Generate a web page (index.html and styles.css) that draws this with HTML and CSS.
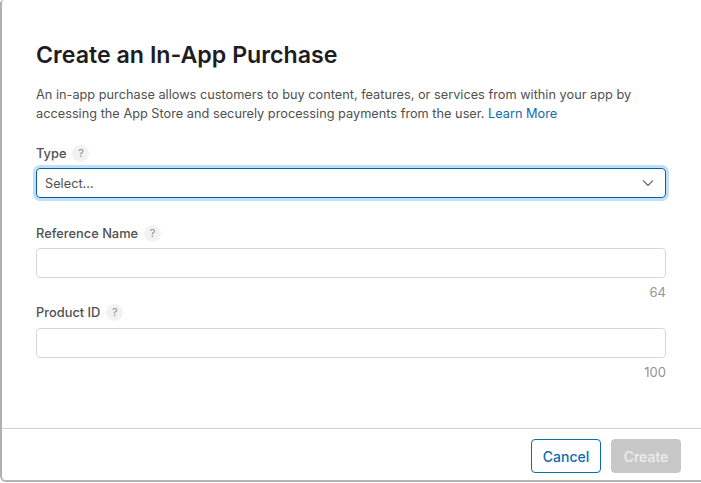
FILE: index.html
```html
<!DOCTYPE html>
<html lang="en">
<head>
<meta charset="utf-8">
<title>Create an In-App Purchase</title>
<link rel="stylesheet" href="styles.css">
</head>
<body>
<div class="modal">
  <div class="content">
    <h1 class="title">Create an In-App Purchase</h1>
    <p class="intro">An in-app purchase allows customers to buy content, features, or services from within your app by accessing the App Store and securely processing payments from the user. <a class="link" href="#">Learn More</a></p>
    <div class="field field-type">
      <div class="label-row"><span class="label">Type</span><span class="help">?</span></div>
      <div class="select">
        <span>Select...</span>
        <svg class="chevron" width="10" height="6" viewBox="0 0 10 6"><path d="M0 .5 5 5.500 10 .5" fill="none" stroke="#666" stroke-width="1.200"/></svg>
      </div>
    </div>
    <div class="field field-name">
      <div class="label-row"><span class="label">Reference Name</span><span class="help">?</span></div>
      <div class="input"></div>
      <div class="count">64</div>
    </div>
    <div class="field field-id">
      <div class="label-row"><span class="label">Product ID</span><span class="help">?</span></div>
      <div class="input"></div>
      <div class="count">100</div>
    </div>
  </div>
  <div class="footer">
    <button class="btn btn-cancel" type="button">Cancel</button>
    <button class="btn btn-create" type="button">Create</button>
  </div>
</div>
</body>
</html>
```
FILE: styles.css
```css
html, body {
  margin: 0;
  padding: 0;
  background: #fff;
}
body {
  font-family: Inter, "Liberation Sans", sans-serif;
  color: #333;
  overflow: hidden;
}
.modal {
  box-sizing: border-box;
  width: 701px;
  height: 482px;
  background: #fff;
  border-left: 2px solid #b0b0b0;
  border-bottom: 2px solid #b4b4b4;
  border-radius: 4px 0 0 6px;
  display: flex;
  flex-direction: column;
}
.content {
  flex: 1;
  padding: 41px 35px 0 34px;
}
.title {
  margin: 0;
  font-size: 23.2px;
  line-height: 29px;
  font-weight: 600;
  color: #1d1d1f;
}
.intro {
  margin: 15px 0 0;
  font-size: 12.75px;
  line-height: 19px;
  color: #505050;
  width: 615px;
}
.link {
  color: #0f6cae;
  text-decoration: none;
}
.field-type { margin-top: 20px; }
.field-name { margin-top: 25px; }
.field-id { margin-top: 2px; }
.label-row {
  display: flex;
  align-items: center;
  gap: 6px;
  height: 20px;
}
.label {
  font-size: 12.85px;
  font-weight: 500;
  color: #505050;
}
.help {
  width: 17px;
  height: 17px;
  border-radius: 50%;
  background: #f2f2f2;
  color: #8a8a8a;
  font-size: 11px;
  line-height: 17px;
  text-align: center;
}
.select {
  box-sizing: border-box;
  margin-top: 5px;
  height: 30px;
  border: 1px solid #0b5f9e;
  border-radius: 4px;
  box-shadow: 0 0 0 3px #bfe0fb;
  padding: 0 12px 0 8px;
  display: flex;
  align-items: center;
  justify-content: space-between;
  font-size: 12.75px;
  color: #505050;
}
.input {
  box-sizing: border-box;
  margin-top: 5px;
  height: 30px;
  border: 1px solid #d6d6d6;
  border-radius: 4px;
}
.field-id .input { margin-top: 6px; }
.count {
  margin-top: 6px;
  height: 16px;
  font-size: 13px;
  line-height: 16px;
  text-align: right;
  color: #949494;
}
.footer {
  box-sizing: border-box;
  flex: none;
  height: 52px;
  border-top: 1px solid #d2d2d2;
  padding: 10px 20px 0 0;
  display: flex;
  align-items: flex-start;
  justify-content: flex-end;
  gap: 10px;
}
.btn {
  box-sizing: border-box;
  width: 70px;
  height: 34px;
  border-radius: 4px;
  font-family: inherit;
  font-size: 14px;
  font-weight: 500;
  padding: 0;
}
.btn-cancel {
  background: #fff;
  border: 1px solid #0b6cb0;
  color: #0b6cb0;
}
.btn-create {
  background: #c8c8c8;
  border: 1px solid #c8c8c8;
  color: #ededed;
}
```
